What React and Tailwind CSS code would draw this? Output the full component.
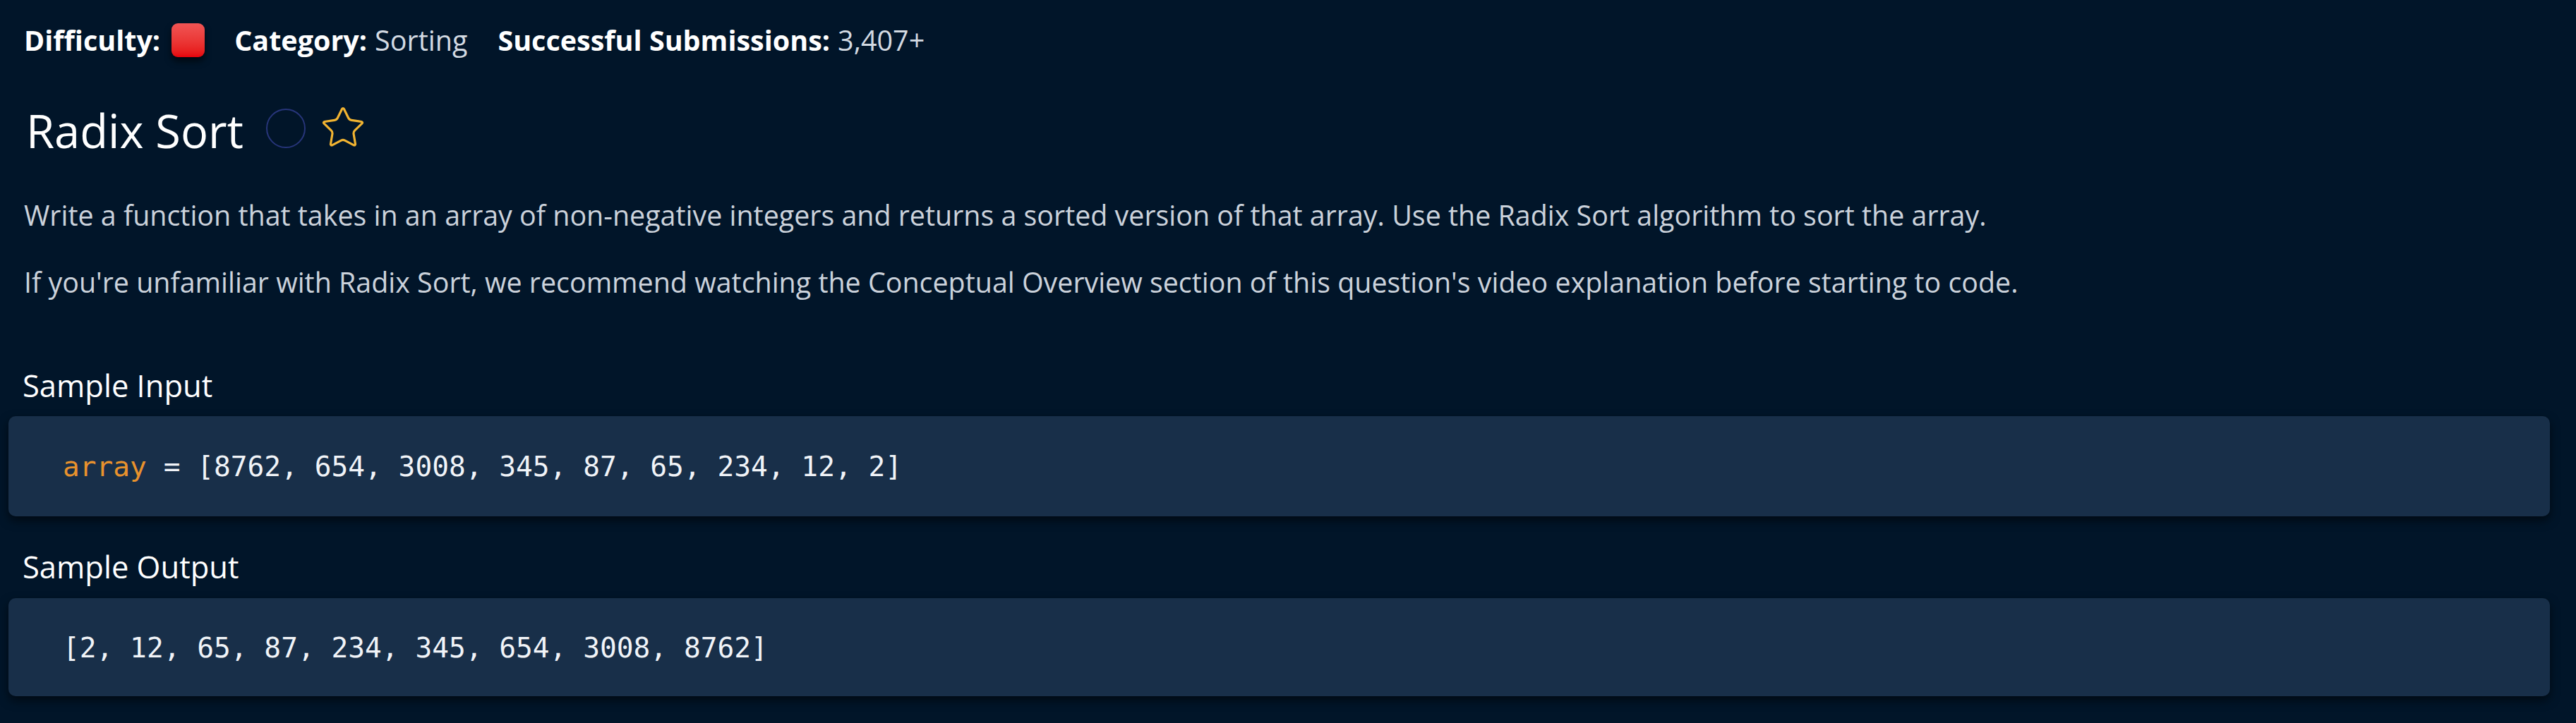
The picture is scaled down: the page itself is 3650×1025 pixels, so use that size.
import React from "react";
import { Star } from "lucide-react";

export default function App() {
  return (
    <div className="min-h-screen w-full bg-[#011529] pl-[34px] pr-[37px] pt-[28px] pb-[40px] font-['Open_Sans',sans-serif]">
      {/* meta row */}
      <div className="flex items-center h-[58px] text-[39.5px] leading-[58px] whitespace-nowrap">
        <span className="font-bold text-white">Difficulty:</span>
        <span className="ml-[16px] w-[47px] h-[48px] rounded-[9px] bg-gradient-to-b from-[#f05454] to-[#e6000b] shadow-[0_6px_10px_rgba(0,0,0,0.6)]"></span>
        <span className="ml-[42px] font-bold text-white">Category:</span>
        <span className="ml-[11px] text-[#d3dae2]">Sorting</span>
        <span className="ml-[43px] font-bold text-white">Successful Submissions:</span>
        <span className="ml-[11px] text-[#d3dae2]">3,407+</span>
      </div>

      {/* title */}
      <div className="mt-[55px] flex items-center h-[88px]">
        <h1 className="ml-[3px] text-[65px] leading-[88px] text-white font-normal">Radix Sort</h1>
        <span className="ml-[32px] -mt-[6px] w-[56px] h-[56px] rounded-full border-[2.5px] border-[#27357a]"></span>
        <span className="ml-[20px] -mt-[8px] flex items-center justify-center">
          <Star size={66} strokeWidth={1.15} color="#f2b431" />
        </span>
      </div>

      {/* description */}
      <p className="mt-[47px] text-[39.4px] leading-[58px] text-[#cbd2db]">
        Write a function that takes in an array of non-negative integers and returns a sorted version of that array. Use the Radix Sort algorithm to sort the array.
      </p>
      <p className="mt-[37px] text-[39.4px] leading-[58px] text-[#cbd2db]">
        If you're unfamiliar with Radix Sort, we recommend watching the Conceptual Overview section of this question's video explanation before starting to code.
      </p>

      {/* sample input */}
      <h3 className="mt-[88px] text-[43.5px] leading-[60px] text-white -ml-[2px]">Sample Input</h3>
      <div className="mt-[13px] -ml-[22px] h-[142px] flex items-center rounded-[10px] bg-[#182f49] shadow-[0_6px_14px_rgba(0,0,0,0.55)] pl-[77px]">
        <pre className="font-['DejaVu_Sans_Mono',monospace] text-[39.5px] leading-[50px] text-[#f1f4f8]">
          <span className="text-[#e8922d]">array</span> = [8762, 654, 3008, 345, 87, 65, 234, 12, 2]
        </pre>
      </div>

      {/* sample output */}
      <h3 className="mt-[42px] text-[43.5px] leading-[60px] text-white -ml-[2px]">Sample Output</h3>
      <div className="mt-[14px] -ml-[22px] h-[139px] flex items-center rounded-[10px] bg-[#182f49] shadow-[0_6px_14px_rgba(0,0,0,0.55)] pl-[77px]">
        <pre className="font-['DejaVu_Sans_Mono',monospace] text-[39.5px] leading-[50px] text-[#f1f4f8]">
          [2, 12, 65, 87, 234, 345, 654, 3008, 8762]
        </pre>
      </div>
    </div>
  );
}
